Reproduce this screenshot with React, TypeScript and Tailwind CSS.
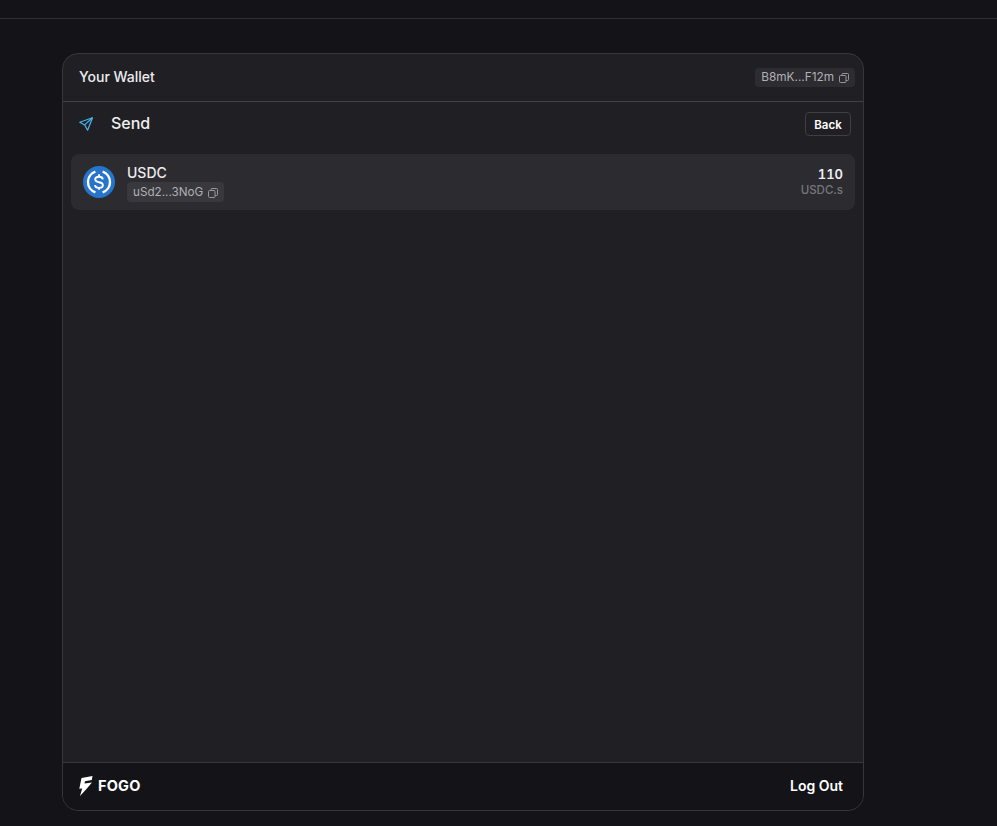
import React from "react";

const CopyIcon = () => (
  <svg width="10" height="10" viewBox="0 0 10 10" fill="none" stroke="currentColor" strokeWidth="1" className="shrink-0 opacity-80">
    <rect x="0.5" y="2.5" width="6.5" height="7" rx="1" />
    <path d="M3 2.5V1.5a1 1 0 0 1 1-1h4.5a1 1 0 0 1 1 1v5a1 1 0 0 1-1 1H7" />
  </svg>
);

const UsdcLogo = () => (
  <svg width="32" height="32" viewBox="0 0 32 32" className="shrink-0">
    <circle cx="16" cy="16" r="16" fill="#2775ca" />
    <path d="M12.4 5.6a11 11 0 0 0 0 20.8" fill="none" stroke="#fff" strokeWidth="2.4" strokeLinecap="butt" />
    <path d="M19.6 5.6a11 11 0 0 1 0 20.8" fill="none" stroke="#fff" strokeWidth="2.4" strokeLinecap="butt" />
    <path d="M19.8 13.3c-.2-1.7-1.7-2.5-3.8-2.5-2.2 0-3.8 1.1-3.8 2.8 0 1.8 1.5 2.3 3.8 2.6 2.4.4 3.9 1 3.9 2.8 0 1.8-1.7 2.9-3.9 2.9-2.3 0-3.8-1.1-4-2.7" fill="none" stroke="#fff" strokeWidth="1.9" />
    <path d="M16 8.2v2.8M16 21v2.8" stroke="#fff" strokeWidth="1.9" />
  </svg>
);

const App: React.FC = () => {
  return (
    <div className="h-[826px] bg-[#131318] font-['Inter',sans-serif] text-white overflow-hidden">
      <div className="h-[19px] border-b border-[#2e2e33]"></div>

      <div className="pl-[62px] pt-[34px]">
        <div className="w-[802px] h-[758px] flex flex-col border border-[#36363b] rounded-2xl bg-[#202024] overflow-hidden">
          {/* wallet header */}
          <div className="h-[48px] shrink-0 flex items-center justify-between pl-4 pr-2 pb-px border-b border-[#414146]">
            <span className="text-[14px] leading-[18px] font-medium text-[#ececee]">Your Wallet</span>
            <div className="h-[19px] mt-px flex items-center gap-[5px] px-[6px] rounded bg-[#2c2c31] text-[11.8px] text-[#b0b0b4]">
              <span>B8mK...F12m</span>
              <CopyIcon />
            </div>
          </div>

          {/* send row */}
          <div className="h-[44px] shrink-0 flex items-center justify-between pl-4 pr-3">
            <div className="flex items-center gap-[18px]">
              <svg width="14" height="14" viewBox="0 0 14 14" fill="none" stroke="#45b4ee" strokeWidth="1.2" strokeLinejoin="round">
                <path d="M13.5 0.8 0.8 5.2 5.6 7.9 8.6 13.2Z" />
                <path d="M13.5 0.8 5.6 7.9" />
              </svg>
              <span className="text-[16px] leading-[20px] mb-[2px] font-medium text-[#f0f0f2]">Send</span>
            </div>
            <button className="w-[46px] h-[24px] flex items-center justify-center border border-[#3e3e43] rounded text-[11.5px] leading-[14px] pt-px font-semibold text-white">
              Back
            </button>
          </div>

          {/* token list */}
          <div className="flex-1 px-2 pt-2">
            <div className="h-[56px] flex items-center justify-between pl-3 pr-3 rounded-lg bg-[#2b2b30]">
              <div className="flex items-center gap-3">
                <UsdcLogo />
                <div className="flex flex-col items-start pt-[2px]">
                  <span className="text-[14px] leading-[18px] font-medium text-[#ececee]">USDC</span>
                  <div className="h-[20px] pt-px flex items-center gap-[5px] px-[6px] rounded bg-[#38383d] text-[11.7px] text-[#b0b0b4]">
                    <span>uSd2...3NoG</span>
                    <CopyIcon />
                  </div>
                </div>
              </div>
              <div className="flex flex-col items-end">
                <span className="text-[13px] leading-[17px] font-semibold tabular-nums text-[#f0f0f2]">110</span>
                <span className="text-[11.5px] leading-[15px] font-medium text-[#77777c]">USDC.s</span>
              </div>
            </div>
          </div>

          {/* footer */}
          <div className="h-[48px] shrink-0 flex items-center justify-between pl-4 pr-5 pb-px border-t border-[#36363b] bg-[#131318]">
            <div className="flex items-center gap-[5px]">
              <svg width="14" height="20" viewBox="0 0 14 20" fill="#fff">
                <path d="M2.5 2 13.5 0 12.8 4 6 5.2 5.5 7.4 13 6.4 7 13.5 1 20 3.2 12.5 0.3 12.8Z" />
              </svg>
              <span className="text-[14.5px] font-bold tracking-[0.2px]">FOGO</span>
            </div>
            <span className="text-[14px] leading-[18px] font-semibold">Log Out</span>
          </div>
        </div>
      </div>
    </div>
  );
};

export default App;
